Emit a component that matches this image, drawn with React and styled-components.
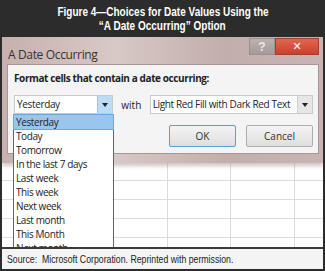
import React from 'react';
import styled, {createGlobalStyle} from 'styled-components';

const GlobalStyle = createGlobalStyle`
  html, body {
    margin: 0;
    padding: 0;
    background: #ffffff;
  }
`;

const dateOptions = [
  'Yesterday',
  'Today',
  'Tomorrow',
  'In the last 7 days',
  'Last week',
  'This week',
  'Next week',
  'Last month',
  'This Month',
  'Next month',
];

const App = () => {
  return (
    <Figure>
      <GlobalStyle/>
      <Caption>
        <CaptionLine>Figure 4—Choices for Date Values Using the</CaptionLine>
        <CaptionLine>“A Date Occurring” Option</CaptionLine>
      </Caption>
      <Shot>
        <Dialog>
          <TitleBar>
            <WindowTitle>A Date Occurring</WindowTitle>
            <HelpButton>?</HelpButton>
            <CloseButton>✕</CloseButton>
          </TitleBar>
          <DialogBody>
            <Label>Format cells that contain a date occurring:</Label>
            <FieldRow>
              <Select $width={98}>
                <SelectText>Yesterday</SelectText>
                <ArrowButton $open/>
                <DropList>
                  {dateOptions.map((item, i) => (
                    <DropItem key={item} $selected={i === 0}>{item}</DropItem>
                  ))}
                </DropList>
              </Select>
              <With>with</With>
              <Select $width={163}>
                <SelectText>Light Red Fill with Dark Red Text</SelectText>
                <ArrowButton/>
              </Select>
            </FieldRow>
            <ButtonRow>
              <DialogButton $primary>OK</DialogButton>
              <DialogButton>Cancel</DialogButton>
            </ButtonRow>
          </DialogBody>
        </Dialog>
        <Sheet>
          {Array.from({length: 20}).map((_, i) => <Cell key={i}/>)}
        </Sheet>
      </Shot>
      <Source>
        <SourceText>Source:&nbsp; Microsoft Corporation. Reprinted with permission.</SourceText>
      </Source>
    </Figure>
  );
};

export default App;

const Figure = styled.div`
  width: 325px;
  height: 271px;
  display: flex;
  flex-direction: column;
  background: #2c2c2c;
  box-sizing: border-box;
  padding: 0 2px 2px 2px;
  overflow: hidden;
`;

const Caption = styled.div`
  height: 37px;
  flex-shrink: 0;
  display: flex;
  flex-direction: column;
  align-items: center;
  justify-content: center;
  color: #ffffff;
  font-family: "Liberation Sans", Arial, sans-serif;
  font-weight: bold;
  font-size: 12.5px;
  line-height: 14px;
  padding-top: 1px;
  box-sizing: border-box;
`;

const CaptionLine = styled.div`
  white-space: nowrap;
  transform: scaleX(0.8);
`;

const Shot = styled.div`
  flex: 1;
  position: relative;
  overflow: hidden;
  background: #ffffff;
  display: flex;
  flex-direction: column;
`;

const Dialog = styled.div`
  flex-shrink: 0;
  background: linear-gradient(90deg, #c7b0ad 0%, #d8c9c6 35%, #c2aeab 70%, #c8b4b1 100%);
  padding: 0 4px 9px 5px;
  box-shadow: 0 3px 4px rgba(120, 90, 90, 0.35);
  position: relative;
  z-index: 1;
`;

const TitleBar = styled.div`
  height: 27px;
  display: flex;
  align-items: flex-start;
`;

const WindowTitle = styled.div`
  flex: 1;
  padding: 10px 0 0 1px;
  font-family: "Open Sans", sans-serif;
  font-size: 12px;
  line-height: 15px;
  color: #333333;
  letter-spacing: -0.35px;
`;

const HelpButton = styled.div`
  width: 26px;
  height: 17px;
  margin-top: 1px;
  background: linear-gradient(#bcb2b0, #a39a99);
  border: 1px solid #9a9090;
  box-sizing: border-box;
  color: #e8e8e8;
  font-family: "Liberation Sans", sans-serif;
  font-weight: bold;
  font-size: 12px;
  display: flex;
  align-items: center;
  justify-content: center;
`;

const CloseButton = styled.div`
  width: 44px;
  height: 17px;
  margin-top: 1px;
  background: linear-gradient(#e2664f, #c9412f);
  border: 1px solid #a73b2d;
  box-sizing: border-box;
  color: #ffffff;
  font-family: "DejaVu Sans", sans-serif;
  font-weight: bold;
  font-size: 11px;
  display: flex;
  align-items: center;
  justify-content: center;
`;

const DialogBody = styled.div`
  background: #f5f4f4;
  border: 1px solid #a99593;
  padding: 5px 5px 6px 6px;
  font-family: "Open Sans", sans-serif;
  color: #222222;
`;

const Label = styled.div`
  font-weight: bold;
  font-size: 10px;
  letter-spacing: -0.4px;
  height: 17px;
  line-height: 17px;
`;

const FieldRow = styled.div`
  margin-top: 8px;
  display: flex;
  align-items: center;
`;

const Select = styled.div`
  position: relative;
  width: ${p => p.$width}px;
  height: 17px;
  display: flex;
  background: #ffffff;
  border: 1px solid #c9c9c9;
`;

const SelectText = styled.div`
  flex: 1;
  font-size: 10px;
  line-height: 17px;
  padding-left: 2px;
  white-space: nowrap;
  overflow: hidden;
  letter-spacing: -0.35px;
`;

const ArrowButton = styled.div`
  width: 14px;
  background: ${p => (p.$open ? '#bcdcf4' : '#e6e6e6')};
  border-left: 1px solid ${p => (p.$open ? '#9cc4e4' : '#d0d0d0')};
  position: relative;

  &::after {
    content: '';
    position: absolute;
    left: 4px;
    top: 7px;
    border-left: 3px solid transparent;
    border-right: 3px solid transparent;
    border-top: 4px solid #222222;
  }
`;

const DropList = styled.div`
  position: absolute;
  left: -2px;
  top: 18px;
  width: 101px;
  background: #ffffff;
  border: 1px solid #646464;
  box-sizing: border-box;
  z-index: 3;
`;

const DropItem = styled.div`
  height: 14px;
  line-height: 14px;
  font-size: 10px;
  padding-left: 2px;
  letter-spacing: -0.4px;
  color: #222222;
  background: ${p => (p.$selected ? '#99c6ee' : 'transparent')};
  outline: ${p => (p.$selected ? '1px solid #6ea6d8' : 'none')};
`;

const With = styled.div`
  width: 37px;
  text-align: center;
  font-size: 10px;
`;

const ButtonRow = styled.div`
  margin-top: 11px;
  display: flex;
  justify-content: flex-end;
  gap: 10px;
`;

const DialogButton = styled.div`
  width: 67px;
  height: 22px;
  box-sizing: border-box;
  border: 1px solid ${p => (p.$primary ? '#4fa3dc' : '#adadad')};
  border-radius: 2px;
  background: linear-gradient(#f4f4f4, #dedede);
  font-size: 10px;
  display: flex;
  align-items: center;
  justify-content: center;
  color: #333333;
`;

const Sheet = styled.div`
  flex: 1;
  display: grid;
  grid-template-columns: 166px 63px 64px 35px;
  grid-auto-rows: 19px;
  margin-top: -1px;
`;

const Cell = styled.div`
  border-right: 1px solid #dcdcdc;
  border-bottom: 1px solid #dcdcdc;
`;

const Source = styled.div`
  flex-shrink: 0;
  height: 20px;
  border-top: 2px solid #3a3a3a;
  background: #f4f4f4;
  padding-left: 5px;
  color: #222222;
`;

const SourceText = styled.div`
  font-family: "Liberation Sans", Arial, sans-serif;
  font-size: 11.5px;
  line-height: 20px;
  white-space: nowrap;
  transform: scaleX(0.76);
  transform-origin: left center;
`;
